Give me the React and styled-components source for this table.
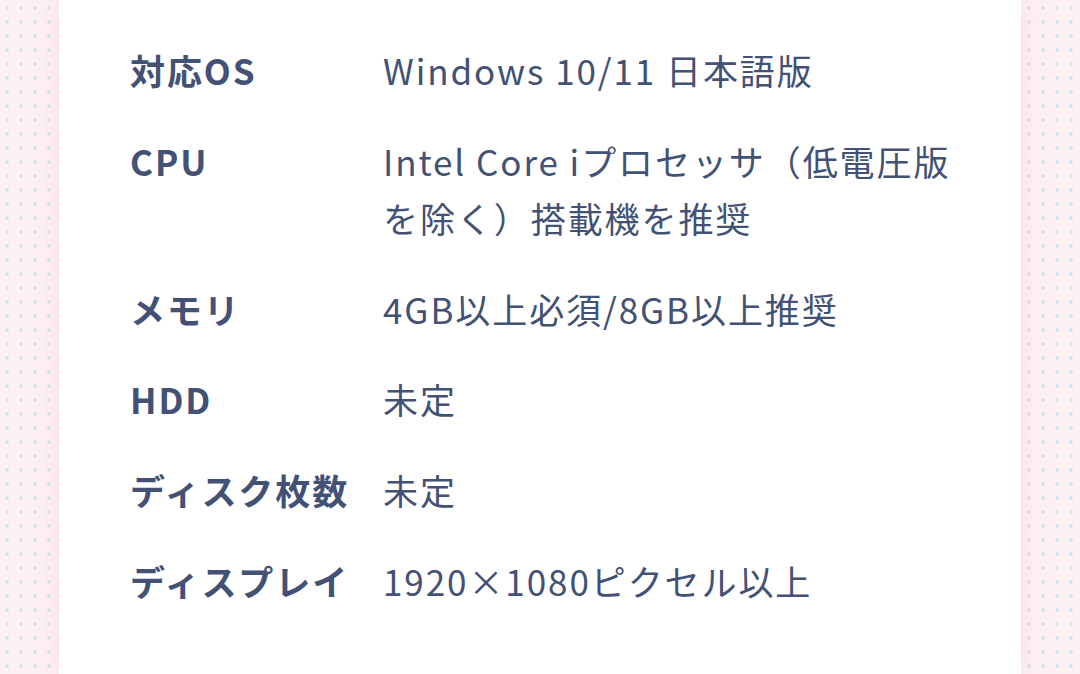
import React from "react";
import styled, { createGlobalStyle } from "styled-components";

const GlobalStyle = createGlobalStyle`
  html, body {
    margin: 0;
    padding: 0;
  }
  body {
    background-color: #fdf1f4;
    background-image: radial-gradient(circle, #d3e5f1 1.6px, transparent 2px);
    background-size: 14px 14px;
    background-position: 0px 1px;
    font-family: "Noto Sans CJK JP", "Noto Sans", sans-serif;
  }
`;

const Page = styled.div`
  height: 674px;
  padding: 0 59px;
  overflow: hidden;
`;

const Card = styled.section`
  background: #fff;
  height: 100%;
  box-sizing: border-box;
  padding: 41px 56px 0 71px;
  box-shadow: 0 0 22px rgba(246, 196, 210, 0.55);
`;

const SpecList = styled.dl`
  margin: 0;
  display: grid;
  grid-template-columns: 253px 1fr;
  row-gap: 33px;
  color: #425174;
  font-size: 35px;
  line-height: 57.6px;
  letter-spacing: 0.055em;
`;

const Term = styled.dt`
  font-weight: 700;
  margin: 0;
`;

const Desc = styled.dd`
  margin: 0;
  font-weight: 400;
`;

const specs = [
  { label: "対応OS", value: "Windows 10/11 日本語版" },
  { label: "CPU", value: "Intel Core iプロセッサ（低電圧版を除く）搭載機を推奨" },
  { label: "メモリ", value: "4GB以上必須/8GB以上推奨" },
  { label: "HDD", value: "未定" },
  { label: "ディスク枚数", value: "未定" },
  { label: "ディスプレイ", value: "1920×1080ピクセル以上" },
];

export default function App() {
  return (
    <>
      <GlobalStyle />
      <Page>
        <Card>
          <SpecList>
            {specs.map((s) => (
              <React.Fragment key={s.label}>
                <Term>{s.label}</Term>
                <Desc>{s.value}</Desc>
              </React.Fragment>
            ))}
          </SpecList>
        </Card>
      </Page>
    </>
  );
}
